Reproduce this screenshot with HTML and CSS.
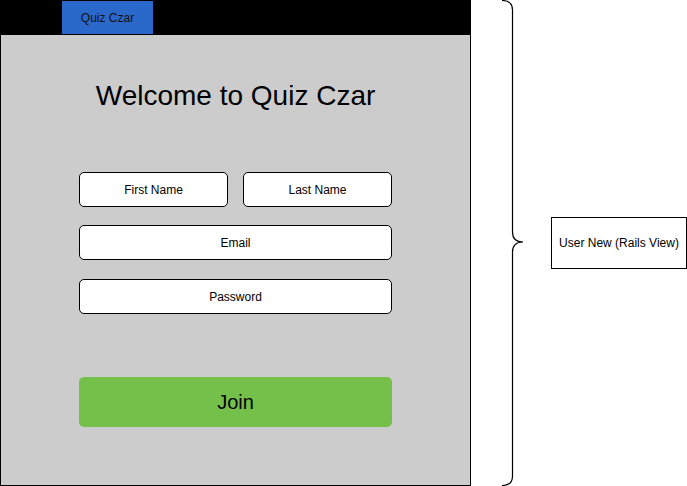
FILE: index.html
```html
<!DOCTYPE html>
<html lang="en">
<head>
<meta charset="utf-8">
<title>Quiz Czar – User New</title>
<link rel="stylesheet" href="styles.css">
</head>
<body>
<div class="page">
  <div class="frame">
    <div class="topbar">
      <div class="tab">Quiz Czar</div>
    </div>
    <div class="canvas">
      <h1 class="title">Welcome to Quiz Czar</h1>
      <div class="form">
        <div class="row">
          <div class="field field-half">First Name</div>
          <div class="field field-half">Last Name</div>
        </div>
        <div class="field field-email">Email</div>
        <div class="field field-password">Password</div>
        <div class="join">Join</div>
      </div>
    </div>
  </div>
  <svg class="brace" width="22" height="486" viewBox="0 0 22 486" aria-hidden="true">
    <path d="M0,0.5 Q10.5,0.5 10.5,10 L10.5,232 Q10.5,242 21,242 Q10.5,242 10.5,252 L10.5,476 Q10.5,485.5 0,485.5" fill="none" stroke="#000" stroke-width="1.2"/>
  </svg>
  <div class="note">User New (Rails View)</div>
</div>
</body>
</html>
```
FILE: styles.css
```css
* { box-sizing: border-box; }
html, body {
  margin: 0;
  padding: 0;
  background: #fff;
}
body {
  font-family: "Liberation Sans", Helvetica, Arial, sans-serif;
  color: #000;
  width: 687px;
  height: 486px;
  overflow: hidden;
}
.page {
  display: flex;
  align-items: center;
  height: 486px;
}
.frame {
  width: 471px;
  height: 486px;
  display: flex;
  flex-direction: column;
  flex: none;
}
.topbar {
  height: 35px;
  background: #000;
  padding-top: 1px;
  padding-left: 62px;
  flex: none;
}
.tab {
  width: 91px;
  height: 33px;
  background: #2a68c9;
  color: #111;
  font-size: 12px;
  display: flex;
  align-items: center;
  justify-content: center;
}
.canvas {
  flex: 1;
  background: #cccccc;
  border: 1px solid #000;
  border-top: none;
  display: flex;
  flex-direction: column;
  align-items: center;
}
.title {
  margin: 45px 0 0;
  font-size: 28px;
  line-height: 32px;
  font-weight: normal;
  text-align: center;
}
.form {
  width: 313px;
  margin-top: 60px;
  display: flex;
  flex-direction: column;
}
.row {
  display: flex;
  gap: 15px;
}
.field {
  flex: none;
  height: 35px;
  background: #fff;
  border: 1px solid #000;
  border-radius: 5px;
  font-size: 12px;
  display: flex;
  align-items: center;
  justify-content: center;
}
.field-half { flex: 1; }
.field-email { margin-top: 18px; }
.field-password { margin-top: 19px; }
.join {
  flex: none;
  margin-top: 63px;
  height: 50px;
  background: #74c04b;
  border-radius: 5px;
  font-size: 20px;
  display: flex;
  align-items: center;
  justify-content: center;
}
.brace {
  flex: none;
  margin-left: 31px;
  display: block;
}
.note {
  flex: none;
  margin-left: 27px;
  width: 136px;
  height: 52px;
  border: 1px solid #000;
  font-size: 12px;
  display: flex;
  align-items: center;
  justify-content: center;
}
```
